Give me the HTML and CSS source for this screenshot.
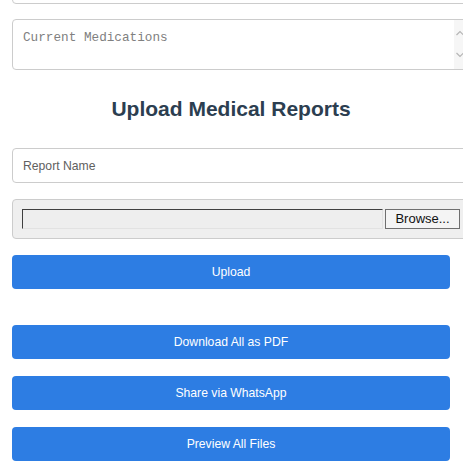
FILE: index.html
```html
<!DOCTYPE html>
<html lang="en">
<head>
<meta charset="utf-8">
<title>Upload Medical Reports</title>
<link rel="stylesheet" href="styles.css">
</head>
<body>
<div class="page">
  <input class="field prev-field" type="text">
  <div class="ta-wrap">
    <textarea class="field meds" placeholder="Current Medications"></textarea>
    <span class="ta-scroll">
      <svg class="chev" width="8" height="6" viewBox="0 0 8 6"><path d="M0.5 5 L4 1.5 L7.5 5" fill="none" stroke="#b5b5b5" stroke-width="1.2"/></svg>
      <svg class="chev" width="8" height="6" viewBox="0 0 8 6"><path d="M0.5 1 L4 4.5 L7.5 1" fill="none" stroke="#b5b5b5" stroke-width="1.2"/></svg>
    </span>
  </div>

  <h2 class="title">Upload Medical Reports</h2>

  <input class="field report" type="text" placeholder="Report Name">

  <div class="file-box">
    <span class="file-text"></span>
    <span class="file-browse">Browse...</span>
  </div>

  <button class="btn btn-upload">Upload</button>
  <button class="btn btn-first">Download All as PDF</button>
  <button class="btn">Share via WhatsApp</button>
  <button class="btn">Preview All Files</button>
</div>
</body>
</html>
```

FILE: styles.css
```css
html, body {
  margin: 0;
  padding: 0;
  overflow: hidden;
  background: #ffffff;
}

.page {
  width: 438px;
  margin: -31px 0 0 12px;
  font-family: "Liberation Sans", Arial, sans-serif;
}

.field {
  display: block;
  box-sizing: border-box;
  width: calc(100% + 22px);
  margin: 0;
  border: 1px solid #cccccc;
  border-radius: 4px;
  background: #ffffff;
  padding: 10px;
  font-family: "Liberation Sans", Arial, sans-serif;
  font-size: 12px;
  color: #333333;
  outline: none;
}

.prev-field {
  height: 35px;
}

.ta-wrap {
  position: relative;
  margin-top: 15px;
}

.meds {
  height: 51px;
  resize: none;
  overflow: hidden;
  font-family: "Liberation Mono", "Courier New", monospace;
  font-size: 12.7px;
  line-height: 15px;
}

.meds::placeholder {
  color: #808080;
}

.ta-scroll {
  position: absolute;
  left: 442px;
  top: 1px;
  bottom: 1px;
  width: 17px;
  background: #f6f6f6;
  display: flex;
  flex-direction: column;
  justify-content: space-between;
  padding: 10px 0 11px 2px;
  box-sizing: border-box;
}

.chev {
  display: block;
}

.title {
  margin: 27px 0 27px;
  text-align: center;
  font-size: 21px;
  font-weight: bold;
  color: #2c3e50;
  line-height: 24px;
}

.report {
  height: 35px;
  font-size: 12.2px;
}

.report::placeholder {
  color: #606060;
}

.file-box {
  box-sizing: border-box;
  width: calc(100% + 20px);
  height: 40px;
  margin-top: 16px;
  padding: 9px;
  border: 1px solid #cccccc;
  border-radius: 4px;
  background: #efefef;
  display: flex;
  gap: 2px;
}

.file-text {
  box-sizing: border-box;
  width: 361px;
  height: 20px;
  border: 1px solid;
  border-color: #3f3f3f #e2e2e2 #e2e2e2 #3f3f3f;
  background: #eeeeee;
}

.file-browse {
  box-sizing: border-box;
  width: 75px;
  height: 20px;
  border: 1px solid #6f6f6f;
  background: #f4f4f4;
  font-size: 13px;
  line-height: 18px;
  text-align: center;
  color: #111111;
}

.btn {
  display: block;
  width: 100%;
  height: 34px;
  margin: 17px 0 0;
  border: none;
  border-radius: 4px;
  background: #2d7de3;
  color: #ffffff;
  font-family: "Liberation Sans", Arial, sans-serif;
  font-size: 12.2px;
  padding: 0;
}

.btn-upload {
  margin-top: 16px;
}

.btn-first {
  margin-top: 36px;
}
```
